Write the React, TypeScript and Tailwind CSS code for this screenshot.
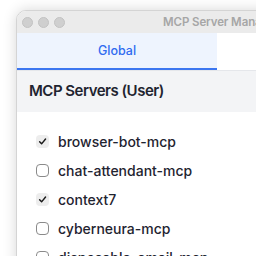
import React from "react";

const servers = [
  { name: "browser-bot-mcp", on: true },
  { name: "chat-attendant-mcp", on: false },
  { name: "context7", on: true },
  { name: "cyberneura-mcp", on: false },
  { name: "disposable-email-mcp", on: false },
];

function Box({ on }: { on: boolean }) {
  if (on) {
    return (
      <div className="w-[13px] h-[13px] rounded-[4px] bg-[#ededed] flex items-center justify-center shrink-0">
        <svg width="9" height="9" viewBox="0 0 10 10">
          <path d="M1.8 5.2 L4 7.6 L8.4 2.2" fill="none" stroke="#1a1a1a" strokeWidth="1.6" strokeLinecap="round" strokeLinejoin="round" />
        </svg>
      </div>
    );
  }
  return <div className="w-[13px] h-[13px] rounded-[4px] border border-[#8a8a8a] bg-white shrink-0" />;
}

export default function App() {
  return (
    <div className="w-[256px] h-[256px] overflow-hidden bg-white pl-[16px] pt-[10px]" style={{ fontFamily: "Inter, 'Noto Sans', sans-serif" }}>
      <div className="w-[420px] h-[320px] rounded-tl-[10px] border border-[#d4d4d4] shadow-[0_0_14px_rgba(0,0,0,0.16)] overflow-hidden flex flex-col bg-white">
        <div className="h-[22px] bg-[#ebebeb] flex items-center shrink-0 pt-[1px]">
          <div className="flex gap-[5px] pl-[5px]">
            <div className="w-[11px] h-[11px] rounded-full bg-[#cfcfcf] border border-[#c2c2c2]" />
            <div className="w-[11px] h-[11px] rounded-full bg-[#cfcfcf] border border-[#c2c2c2]" />
            <div className="w-[11px] h-[11px] rounded-full bg-[#cfcfcf] border border-[#c2c2c2]" />
          </div>
          <div className="pl-[98px] text-[11.5px] font-semibold text-[#a6a6a6] whitespace-nowrap tracking-[-0.1px]">MCP Server Manager</div>
        </div>
        <div className="h-[38px] flex border-b border-[#e5e7eb] shrink-0">
          <div className="w-[200px] bg-[#eef4fe] border-b-2 border-[#3b76f0] flex items-center justify-center text-[12.5px] font-medium text-[#2f6bf0] pt-[1px]">
            Global
          </div>
          <div className="flex-1 bg-white" />
        </div>
        <div className="h-[41px] bg-[#f3f4f6] flex items-center pl-[12px] shrink-0">
          <span className="text-[15px] font-semibold text-[#1f2430] tracking-[-0.5px]">MCP Servers (User)</span>
        </div>
        <div className="pt-[15px] flex flex-col">
          {servers.map((s) => (
            <div key={s.name} className="h-[29px] flex items-center pl-[19px] gap-[9px]">
              <Box on={s.on} />
              <span className="text-[14px] font-medium text-[#1f2430]">{s.name}</span>
            </div>
          ))}
        </div>
      </div>
    </div>
  );
}
